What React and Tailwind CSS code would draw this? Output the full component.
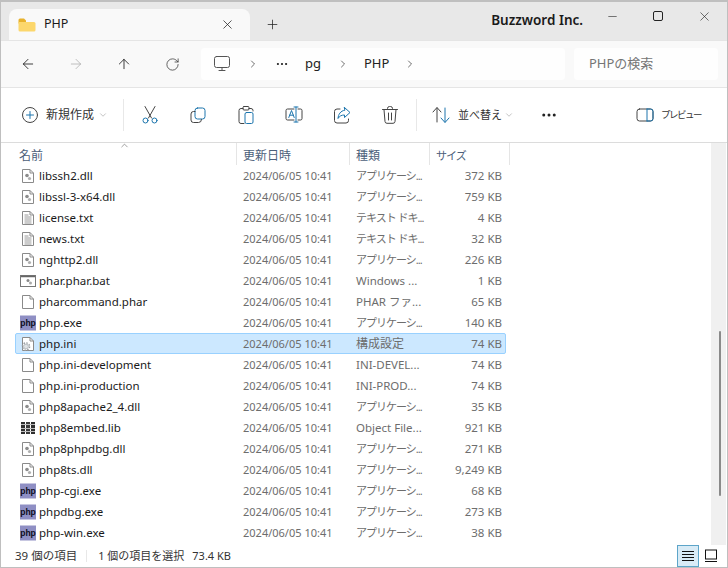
import { ArrowLeft, ArrowRight, ArrowUp, RotateCw, ChevronRight, ChevronDown, ChevronUp, X, Plus, Minus, Ellipsis } from 'lucide-react'

const files = [
  ['libssh2.dll', 'アプリケーシ...', '372 KB', 'dll'],
  ['libssl-3-x64.dll', 'アプリケーシ...', '759 KB', 'dll'],
  ['license.txt', 'テキスト ドキ...', '4 KB', 'txt'],
  ['news.txt', 'テキスト ドキ...', '32 KB', 'txt'],
  ['nghttp2.dll', 'アプリケーシ...', '226 KB', 'dll'],
  ['phar.phar.bat', 'Windows ...', '1 KB', 'bat'],
  ['pharcommand.phar', 'PHAR ファ...', '65 KB', 'blank'],
  ['php.exe', 'アプリケーシ...', '140 KB', 'php'],
  ['php.ini', '構成設定', '74 KB', 'ini'],
  ['php.ini-development', 'INI-DEVEL...', '74 KB', 'blank'],
  ['php.ini-production', 'INI-PROD...', '74 KB', 'blank'],
  ['php8apache2_4.dll', 'アプリケーシ...', '35 KB', 'dll'],
  ['php8embed.lib', 'Object File...', '921 KB', 'lib'],
  ['php8phpdbg.dll', 'アプリケーシ...', '271 KB', 'dll'],
  ['php8ts.dll', 'アプリケーシ...', '9,249 KB', 'dll'],
  ['php-cgi.exe', 'アプリケーシ...', '68 KB', 'php'],
  ['phpdbg.exe', 'アプリケーシ...', '273 KB', 'php'],
  ['php-win.exe', 'アプリケーシ...', '38 KB', 'php'],
]

const Page = ({ children }) => (
  <svg width="16" height="16" viewBox="0 0 16 16" fill="none">
    <path d="M2.5 1.5h7.5l3.5 3.5v9.500h-11z" fill="#fff" stroke="#8a8a8a" />
    <path d="M10 1.5v3.5h3.5" stroke="#8a8a8a" />
    {children}
  </svg>
)

const FileIcon = ({ type }) => {
  if (type === 'php') {
    return (
      <svg width="16" height="16" viewBox="0 0 16 16">
        <rect x="0" y="0.5" width="16" height="15" fill="#8f8fc4" />
        <text x="8" y="10.500" textAnchor="middle" fontSize="8.500" fontWeight="700" fill="#0c0c20" fontFamily="'Liberation Sans', sans-serif">php</text>
      </svg>
    )
  }
  if (type === 'lib') {
    return (
      <svg width="16" height="16" viewBox="0 0 16 16">
        <rect x="1" y="2" width="4" height="12" fill="#2f2f2f" />
        <rect x="6" y="2" width="4" height="12" fill="#3a3a3a" />
        <rect x="11" y="2" width="4" height="12" fill="#2f2f2f" />
        <path d="M1 4.500h14M1 8.500h14M1 11.500h14" stroke="#bbb" />
      </svg>
    )
  }
  if (type === 'bat') {
    return (
      <svg width="16" height="16" viewBox="0 0 16 16" fill="none">
        <rect x="0.5" y="2.500" width="15" height="11" fill="#fff" stroke="#777" />
        <path d="M1 3.500h14" stroke="#666" strokeWidth="1.500" />
        <circle cx="8" cy="7.500" r="1.500" fill="#888" />
        <circle cx="10.500" cy="10" r="1.500" fill="#aaa" />
      </svg>
    )
  }
  if (type === 'txt') {
    return (
      <Page>
        <path d="M4.500 5h4M4.500 7h7M4.500 9h7M4.500 11h7M4.500 13h7" stroke="#9a9a9a" />
      </Page>
    )
  }
  if (type === 'dll') {
    return (
      <Page>
        <circle cx="7" cy="7.500" r="1.800" fill="#8c8c8c" />
        <circle cx="9.500" cy="10.500" r="1.600" fill="#b0b0b0" />
      </Page>
    )
  }
  if (type === 'ini') {
    return (
      <Page>
        <circle cx="6" cy="10.500" r="3.600" stroke="#9aa0a5" strokeWidth="1.400" strokeDasharray="1.500 1.300" />
        <circle cx="6" cy="10.500" r="2.400" fill="#dfe3e6" stroke="#a4a9ad" strokeWidth="0.700" />
      </Page>
    )
  }
  return <Page />
}

const Stroke = ({ children, w = 20 }) => (
  <svg width={w} height="20" viewBox="0 0 20 20" fill="none" stroke="#444" strokeWidth="1" strokeLinecap="round" strokeLinejoin="round">
    {children}
  </svg>
)

const BLUE = '#1c75ad'

const CutIcon = () => (
  <Stroke>
    <path d="M5 1.500 11.500 13M15 1.500 8.500 13" />
    <circle cx="5.500" cy="15.500" r="2.500" stroke={BLUE} />
    <circle cx="14.500" cy="15.500" r="2.500" stroke={BLUE} />
  </Stroke>
)
const CopyIcon = () => (
  <Stroke>
    <rect x="7" y="3" width="10" height="11" rx="2.500" stroke={BLUE} />
    <path d="M7 6.500H5.500A2.500 2.500 0 0 0 3 9v6a2.500 2.500 0 0 0 2.500 2.500h5a3 3 0 0 0 3-3" />
  </Stroke>
)
const PasteIcon = () => (
  <Stroke>
    <path d="M7 3.500H5A2 2 0 0 0 3 5.500v11A2 2 0 0 0 5 18.500h3M13 3.500h2a2 2 0 0 1 2 2V6" />
    <rect x="7" y="1.500" width="6" height="3.500" rx="1" />
    <rect x="9" y="7.500" width="8" height="11" rx="1.500" stroke={BLUE} />
  </Stroke>
)
const RenameIcon = () => (
  <Stroke>
    <path d="M10 4H3.500A1.500 1.500 0 0 0 2 5.500v8A1.500 1.500 0 0 0 3.500 15H10M14 4h2.500A1.500 1.500 0 0 1 18 5.500v8a1.500 1.500 0 0 1-1.500 1.500H14" />
    <path d="M12 2v15M10 2h4M10 17h4" stroke={BLUE} />
    <path d="m4.800 12.500 2.700-7 2.700 7M5.700 10.200h3.600" stroke={BLUE} />
  </Stroke>
)
const ShareIcon = () => (
  <Stroke>
    <path d="M8 4H5A2.500 2.500 0 0 0 2.500 6.500v9A2.500 2.500 0 0 0 5 18h9a2.500 2.500 0 0 0 2.500-2.500V14" />
    <path d="M12.500 2.500 18 7.500l-5.500 5V10C9.500 10 7.500 11 6 13.500 6.300 9.500 8.500 5.800 12.500 5.300z" stroke={BLUE} />
  </Stroke>
)
const TrashIcon = () => (
  <Stroke>
    <path d="M2.500 4.500h15M7.500 4.500v-1A2 2 0 0 1 9.500 1.500h1a2 2 0 0 1 2 2v1M4 4.500l1 12a2 2 0 0 0 2 1.800h6a2 2 0 0 0 2-1.800l1-12M8.500 8v7M11.500 8v7" />
  </Stroke>
)
const SortIcon = () => (
  <Stroke>
    <path d="M6 17V3M2 7l4-4.500L10 7" />
    <path d="M14 3v14M10 13l4 4.500 4-4.500" stroke={BLUE} />
  </Stroke>
)
const PreviewIcon = () => (
  <Stroke>
    <rect x="2" y="4" width="16" height="12" rx="2.500" />
    <path d="M12 4v12" stroke={BLUE} />
    <path d="M12 4h3.500A2.500 2.500 0 0 1 18 6.500v7a2.500 2.500 0 0 1-2.500 2.500H12" stroke={BLUE} />
  </Stroke>
)
const NewIcon = () => (
  <Stroke>
    <circle cx="10" cy="10" r="7.500" />
    <path d="M10 6.500v7M6.500 10h7" stroke={BLUE} />
  </Stroke>
)
const PcIcon = () => (
  <Stroke>
    <rect x="2.500" y="2.500" width="15" height="11" rx="2" stroke="#555" />
    <path d="M7 16.500h6M10 13.500v3" stroke="#555" />
  </Stroke>
)
const FolderIcon = () => (
  <svg width="18" height="16" viewBox="0 0 18 16">
    <path d="M0.500 3a1.500 1.500 0 0 1 1.500-1.500h4l2 2v3H0.500z" fill="#e8b22c" />
    <path d="M0.500 5h15.500a1.500 1.500 0 0 1 1.500 1.500v6.500a1.500 1.500 0 0 1-1.500 1.500H2a1.500 1.500 0 0 1-1.500-1.500z" fill="#fcd76c" />
  </svg>
)

const ToolBtn = ({ children }) => (
  <div className="w-12 h-8 flex items-center justify-center">{children}</div>
)

const NavBtn = ({ children }) => (
  <div className="w-12 h-8 flex items-center justify-center">{children}</div>
)

const Sep = () => <div className="w-px h-8 bg-[#e8e8e8]" />

const HeaderCell = ({ w, children, pl = 'pl-[6px]' }) => (
  <div className={`${w} h-full border-r border-[#e5e5e5] ${pl} pt-[4px] flex items-center text-[#4c607a]`}>{children}</div>
)

const FileRow = ({ file }) => {
  const [name, kind, size, type] = file
  const selected = name === 'php.ini'
  const latinKind = /^[A-Z]/.test(kind)
  const kanaKind = !latinKind && kind !== '構成設定'
  return (
    <div className={`h-[21px] w-[491px] flex items-center rounded-[2px] border text-[11.5px] ${selected ? 'bg-[#cce8ff] border-[#99d1ff]' : 'border-transparent'}`}>
      <div className="w-[22px] pl-[1px] shrink-0 flex items-center justify-center"><FileIcon type={type} /></div>
      <div className="w-[205px] pl-[1px] shrink-0 text-[#1a1a1a] truncate">{name}</div>
      <div className="w-[113px] pt-[1px] shrink-0 text-[#6d6d6d] whitespace-nowrap text-[11px]">2024/06/05 10:41</div>
      <div className={`w-[72px] pt-[1px] shrink-0 text-[#6d6d6d] whitespace-nowrap ${kanaKind ? 'text-[11px] tracking-[-1px]' : ''} ${kind === '構成設定' ? 'text-[12px]' : ''}`}>{kind}</div>
      <div className="w-[74px] shrink-0 text-right text-[#6d6d6d] whitespace-nowrap">{size}</div>
    </div>
  )
}

export default function App() {
  return (
    <div className="w-[728px] h-[568px] flex flex-col overflow-hidden border border-[#bfbfbf] border-t-2 bg-white text-[12px] font-['Noto_Sans','Noto_Sans_CJK_JP',sans-serif]">
      {/* title bar */}
      <div className="h-[38px] shrink-0 bg-[#e8e8e8] flex items-end pl-[8px]">
        <div className="w-[241px] h-[31px] bg-[#f9f9f9] rounded-t-lg flex items-center pl-[9px] pr-[15px]">
          <FolderIcon />
          <span className="ml-[8px] text-[12.5px] text-[#1a1a1a]">PHP</span>
          <X size={15} strokeWidth={1.2} className="ml-auto text-[#222]" />
        </div>
        <div className="w-[44px] h-[31px] flex items-center justify-center">
          <Plus size={15} strokeWidth={1.2} className="text-[#222]" />
        </div>
        <div className="ml-auto self-start h-full flex items-start">
          <span className="mt-[8px] mr-[6px] text-[13.5px] font-semibold text-[#1a1a1a]">Buzzword Inc.</span>
          <div className="w-[46px] h-[28px] flex items-center justify-center"><Minus size={13} strokeWidth={1.1} className="text-[#222]" /></div>
          <div className="w-[46px] h-[28px] flex items-center justify-center">
            <div className="w-[10px] h-[10px] border border-[#222] rounded-[2px]" />
          </div>
          <div className="w-[46px] h-[28px] flex items-center justify-center"><X size={15} strokeWidth={1} className="text-[#222]" /></div>
        </div>
      </div>

      {/* nav bar */}
      <div className="h-[48px] shrink-0 bg-[#f9f9f9] border-y border-[#e5e5e5] flex items-center pl-[3px] pr-[9px]">
        <NavBtn><ArrowLeft size={16} strokeWidth={1.3} className="text-[#222]" /></NavBtn>
        <NavBtn><ArrowRight size={16} strokeWidth={1.2} className="text-[#b0b0b0]" /></NavBtn>
        <NavBtn><ArrowUp size={16} strokeWidth={1.3} className="text-[#222]" /></NavBtn>
        <NavBtn><RotateCw size={15} strokeWidth={1.2} className="text-[#333]" /></NavBtn>
        <div className="ml-[5px] w-[364px] h-[32px] bg-[#fefefe] rounded-[4px] flex items-center pl-[11px] text-[13px] text-[#222]">
          <PcIcon />
          <ChevronRight size={12} strokeWidth={1.3} className="ml-[15px] text-[#222]" />
          <Ellipsis size={14} strokeWidth={1.8} className="ml-[16px] text-[#222]" />
          <span className="ml-[16px]">pg</span>
          <ChevronRight size={12} strokeWidth={1.3} className="ml-[16px] text-[#222]" />
          <span className="ml-[15px]">PHP</span>
          <ChevronRight size={12} strokeWidth={1.3} className="ml-[15px] text-[#222]" />
        </div>
        <div className="ml-[9px] flex-1 h-[32px] bg-[#fefefe] rounded-[4px] flex items-center pl-[15px] text-[13px] text-[#757575]">PHPの検索</div>
      </div>

      {/* command bar */}
      <div className="h-[55px] shrink-0 bg-white border-b border-[#dcdcdc] flex items-center pl-[19px]">
        <NewIcon />
        <span className="ml-[6px] text-[#333]">新規作成</span>
        <ChevronDown size={10} strokeWidth={1.2} className="ml-[4px] text-[#888]" />
        <div className="ml-[15px]"><Sep /></div>
        <div className="ml-[2px] flex items-center">
          <ToolBtn><CutIcon /></ToolBtn>
          <ToolBtn><CopyIcon /></ToolBtn>
          <ToolBtn><PasteIcon /></ToolBtn>
          <ToolBtn><RenameIcon /></ToolBtn>
          <ToolBtn><ShareIcon /></ToolBtn>
          <ToolBtn><TrashIcon /></ToolBtn>
        </div>
        <div className="ml-[2px]"><Sep /></div>
        <div className="ml-[14px]"><SortIcon /></div>
        <span className="ml-[7px] text-[11px] text-[#333]">並べ替え</span>
        <ChevronDown size={10} strokeWidth={1.2} className="ml-[2px] text-[#888]" />
        <Ellipsis size={18} strokeWidth={2} className="ml-[26px] text-[#222]" />
        <div className="ml-[77px]"><PreviewIcon /></div>
        <span className="ml-[6px] text-[9.5px] text-[#333] tracking-[-1.5px] whitespace-nowrap">プレビュー</span>
      </div>

      {/* list */}
      <div className="flex-1 min-h-0 flex relative">
        <div className="flex-1 min-w-0 pl-[14px] overflow-hidden">
          <div className="h-[22px] flex items-center relative">
            <ChevronUp size={11} strokeWidth={1.2} className="absolute left-[104px] -top-[3px] text-[#555]" />
            <HeaderCell w="w-[222px]" pl="pl-[4px]">名前</HeaderCell>
            <HeaderCell w="w-[113px]">更新日時</HeaderCell>
            <HeaderCell w="w-[80px]">種類</HeaderCell>
            <HeaderCell w="w-[80px]"><span className="text-[11px] tracking-[-1px]">サイズ</span></HeaderCell>
          </div>
          {files.map(f => <FileRow key={f[0]} file={f} />)}
        </div>
        <div className="w-[15px] mr-[1px] shrink-0 bg-[#f0f0f0] flex justify-end pr-[5px] pt-[188px]">
          <div className="w-[2px] h-[165px] bg-[#8a8a8a] rounded-full" />
        </div>
      </div>

      {/* status bar */}
      <div className="h-[22px] shrink-0 flex items-center pl-[14px] pr-[5px] text-[#333] text-[11.5px]">
        <span>39 個の項目</span>
        <div className="ml-[9px] w-px h-[12px] bg-[#e8e8e8]" />
        <span className="ml-[11px] text-[11px]">1 個の項目を選択</span>
        <span className="ml-[8px] text-[11px]">73.4 KB</span>
        <div className="ml-auto w-[22px] h-[22px] bg-[#d8ebf6] border border-[#5da5c9] flex items-center justify-center">
          <svg width="14" height="14" viewBox="0 0 14 14" stroke="#111"><path d="M1 2.500h12M1 5.500h12M1 8.500h12M1 11.500h12" /></svg>
        </div>
        <div className="ml-px w-[22px] h-[22px] flex items-center justify-center">
          <svg width="14" height="14" viewBox="0 0 14 14" fill="none" stroke="#111"><rect x="1.500" y="1" width="11" height="9" /><path d="M1 12.500h12" /></svg>
        </div>
      </div>
    </div>
  )
}
